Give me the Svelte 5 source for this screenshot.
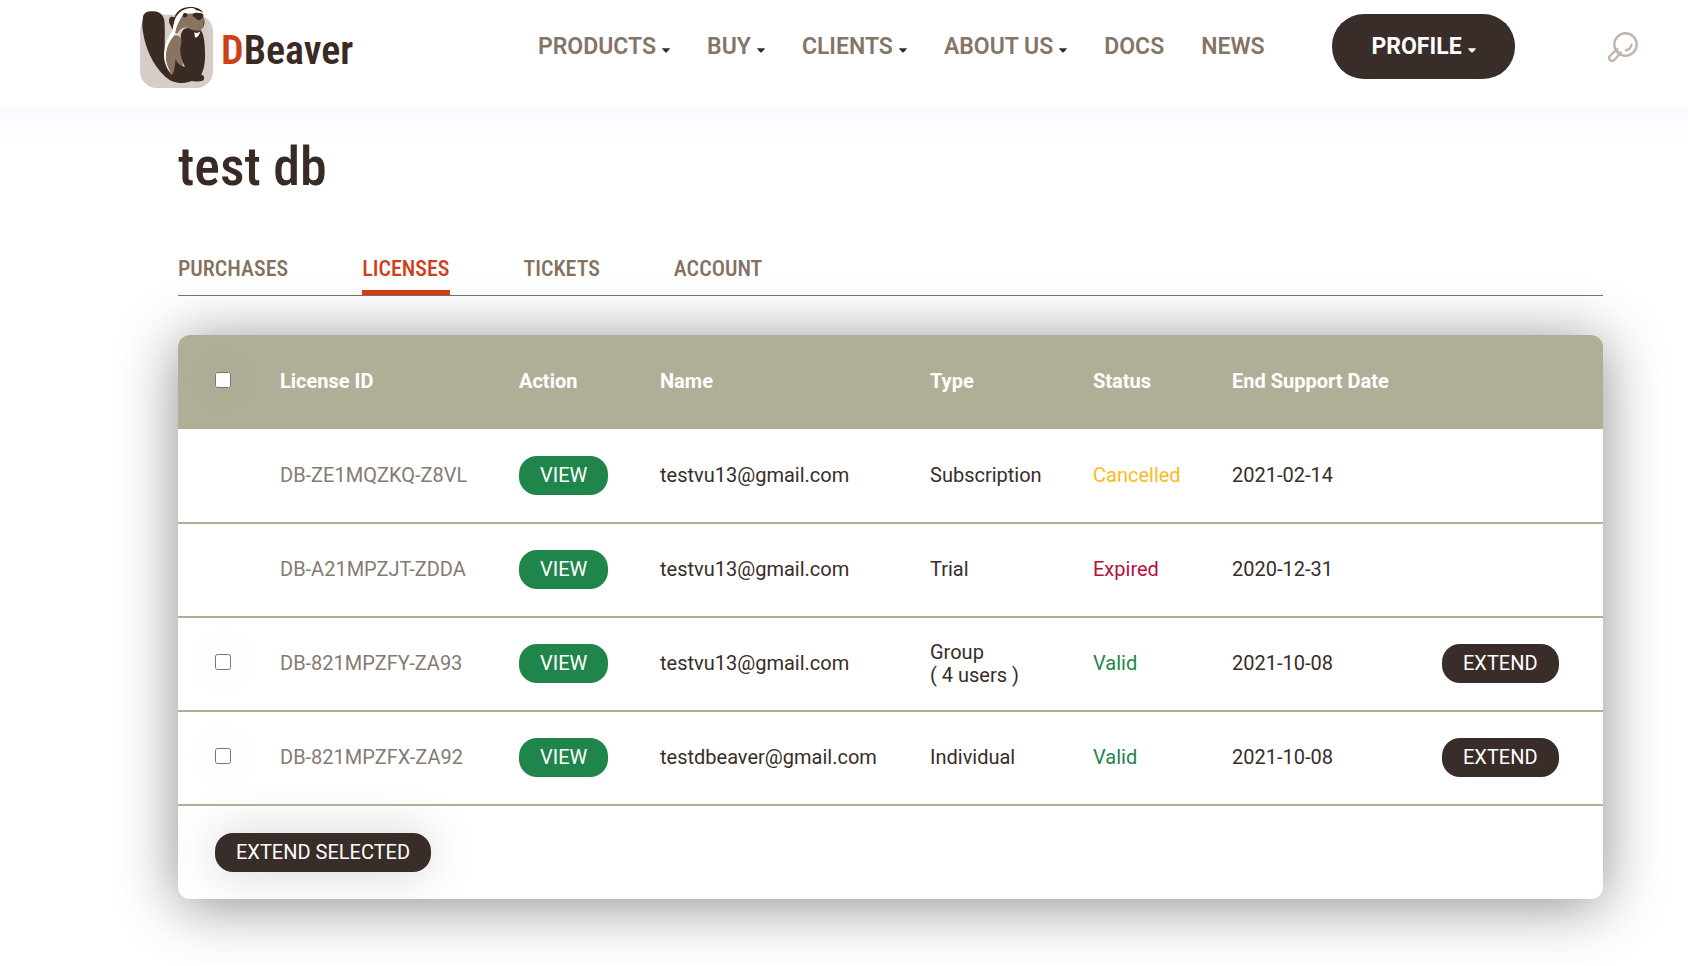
<script>
  const nav = [
    { label: 'PRODUCTS', menu: true },
    { label: 'BUY', menu: true },
    { label: 'CLIENTS', menu: true },
    { label: 'ABOUT US', menu: true },
    { label: 'DOCS', menu: false },
    { label: 'NEWS', menu: false }
  ];
  const tabs = ['PURCHASES', 'LICENSES', 'TICKETS', 'ACCOUNT'];
  const columns = [65, 239, 141, 270, 163, 139, 210, 198];
  const licenses = [
    { id: 'DB-ZE1MQZKQ-Z8VL', name: 'testvu13@gmail.com', type: 'Subscription', status: 'Cancelled', end: '2021-02-14', extend: false },
    { id: 'DB-A21MPZJT-ZDDA', name: 'testvu13@gmail.com', type: 'Trial', status: 'Expired', end: '2020-12-31', extend: false },
    { id: 'DB-821MPZFY-ZA93', name: 'testvu13@gmail.com', type: 'Group', users: '( 4 users )', status: 'Valid', end: '2021-10-08', extend: true },
    { id: 'DB-821MPZFX-ZA92', name: 'testdbeaver@gmail.com', type: 'Individual', status: 'Valid', end: '2021-10-08', extend: true }
  ];
  let active = $state('LICENSES');
  let selected = $state([]);
  const selectable = licenses.filter((l) => l.extend).map((l) => l.id);
  function toggleAll(e) {
    selected = e.currentTarget.checked ? [...selectable] : [];
  }
</script>

{#snippet caret()}
  <svg class="caret" viewBox="0 0 8 5" aria-hidden="true"><path d="M0.4 0.3h7.2q.5 0 .1.6L5 4Q4 5 3 4L.3.9Q-.1.3.4.3z" fill="currentColor" /></svg>
{/snippet}

<header>
  <a class="logo" href="#home">
    <svg class="beaver" viewBox="12 12 225 255" aria-hidden="true">
      <rect x="15" y="44" width="219" height="220" rx="50" fill="#d7cdc8" />
      <path d="M24 53C24 37 40 32 58 34C82 37 89 53 89 74C91 105 87 134 91 165L99 202C106 219 112 227 122 231L175 233L199 224C207 225 210 234 205 241C195 247 180 242 169 243C145 254 113 248 99 236C66 212 34 158 25 101C21 79 21 66 24 53Z" fill="#3a2a24" />
      <path d="M113 89L103 69C100 54 105 47 119 52C123 33 144 21 164 21C184 20 198 27 205 38C191 30 174 27 156 31C140 34 128 43 122 57C116 67 114 79 113 89Z" fill="#3a2a24" />
      <path d="M119 61C127 37 144 27 165 24C178 23 187 29 181 35C168 41 154 40 144 45C140 53 139 61 132 70C126 81 123 90 121 103C107 119 96 140 93 163C92 185 98 205 111 225C90 202 83 174 89 145C92 125 103 106 113 91Z" fill="#fff" />
      <path d="M144 45C158 38 173 41 182 40C191 38 203 38 205 49C211 67 207 79 198 90C188 97 174 93 160 84C145 78 132 88 126 104L149 122L143 198L150 236L122 231L111 225C96 197 91 178 93 161C96 136 107 119 121 103C121 85 132 61 144 45Z" fill="#8b7362" />
      <path d="M144 45C144 37 156 38 158 45C158 51 150 54 144 51ZM173 43C175 36 202 37 205 44C206 51 198 60 191 61C185 56 176 52 173 48ZM205 54C212 66 207 80 200 89C207 76 207 65 205 54Z" fill="#3a2a24" />
      <path d="M138 114C136 96 145 84 160 84C170 90 184 94 198 91C208 108 209 129 210 153C211 181 209 204 199 224L207 232C211 242 192 246 170 243C150 249 127 248 112 233L111 225C119 214 119 196 122 178C127 191 137 199 150 201C140 178 135 162 136 143C138 132 141 123 138 114Z" fill="#3a2a24" />
      <path d="M177 97C185 100 190 99 196 94C193 105 188 113 182 113C178 110 180 104 177 97ZM111 89C113 99 120 103 132 101L129 105C116 108 109 101 111 89Z" fill="#fff" />
    </svg>
    <span class="wordmark"><span>D</span>Beaver</span>
  </a>
  <nav>
    {#each nav as item}
      <a href="#{item.label.toLowerCase()}">{item.label}{#if item.menu}{@render caret()}{/if}</a>
    {/each}
  </nav>
  <button class="profile" type="button">PROFILE{@render caret()}</button>
  <button class="search" type="button" aria-label="Search">
    <svg viewBox="0 0 30 30" fill="none" stroke="#c1b6ae" stroke-width="2.400" stroke-linecap="round" aria-hidden="true">
      <circle cx="17.500" cy="12.500" r="11.200" />
      <path d="M23.500 12.800a7 7 0 0 1-5.500 5.500" />
      <path d="M7.500 18.500l-5.300 5.200c-1.300 1.500-1.200 3.400 0 4.500s3 1 4.300-.4l5-5.600" />
      <path d="M7.500 18.500c2 .2 3.600 1.700 4 3.700M8 18.400l1.300-1.400M11.800 21.800l1.200-1.200" />
    </svg>
  </button>
</header>

<main>
  <h1>test db</h1>
  <div class="tabs">
    {#each tabs as tab}
      <button type="button" class:active={active === tab} onclick={() => (active = tab)}>{tab}</button>
    {/each}
  </div>

  <section class="card">
    <table>
      <colgroup>
        {#each columns as w}<col style="width: {w}px" />{/each}
      </colgroup>
      <thead>
        <tr>
          <th><input type="checkbox" aria-label="Select all" onchange={toggleAll} /></th>
          <th>License ID</th>
          <th>Action</th>
          <th>Name</th>
          <th>Type</th>
          <th>Status</th>
          <th>End Support Date</th>
          <th></th>
        </tr>
      </thead>
      <tbody>
        {#each licenses as l}
          <tr>
            <td>{#if l.extend}<input type="checkbox" aria-label={l.id} value={l.id} bind:group={selected} />{/if}</td>
            <td><a href="#{l.id}">{l.id}</a></td>
            <td><button class="pill view" type="button">VIEW</button></td>
            <td>{l.name}</td>
            <td>{l.type}{#if l.users}<br />{l.users}{/if}</td>
            <td class={l.status.toLowerCase()}>{l.status}</td>
            <td>{l.end}</td>
            <td>{#if l.extend}<button class="pill" type="button">EXTEND</button>{/if}</td>
          </tr>
        {/each}
      </tbody>
      <tfoot>
        <tr>
          <td colspan="8"><button class="pill raised" type="button">EXTEND SELECTED</button></td>
        </tr>
      </tfoot>
    </table>
  </section>
</main>

<style>
  :global(body) {
    margin: 0;
    background: #fff;
    color: #382d29;
    font: 20px/23px Roboto, sans-serif;
  }
  a {
    color: inherit;
    text-decoration: none;
  }
  button {
    border: 0;
    font: inherit;
    cursor: pointer;
  }
  header {
    display: flex;
    height: 107px;
    box-sizing: border-box;
    padding: 0 50px 14px 139px;
    align-items: center;
    background: #fff;
  }
  .logo {
    display: flex;
    align-items: center;
    gap: 7px;
    width: 399px;
  }
  .beaver {
    width: 75px;
    height: 85px;
  }
  .wordmark {
    padding-top: 8px;
    color: #3a2a24;
    font: 600 40px/48px "Roboto Condensed", "Liberation Sans Narrow", sans-serif;
  }
  .wordmark span {
    color: #d03e18;
  }
  nav {
    display: flex;
    gap: 37px;
    color: #857567;
    font-size: 23px;
    font-weight: 600;
    line-height: 28px;
    white-space: nowrap;
  }
  .caret {
    width: 8px;
    height: 5px;
    margin: 0 0 1px 6px;
    color: #382d29;
  }
  .profile {
    width: 183px;
    height: 65px;
    margin-left: auto;
    padding: 0;
    border-radius: 32px;
    background: #382d29;
    color: #fff;
    font-size: 23px;
    font-weight: 700;
    white-space: nowrap;
  }
  .profile .caret {
    color: #fff;
  }
  .search {
    width: 30px;
    height: 30px;
    margin-left: 93px;
    padding: 0;
    background: none;
  }
  .search svg {
    display: block;
    width: 30px;
    height: 30px;
  }
  main {
    padding: 24px 85px 64px 178px;
    background: linear-gradient(#f8f9fd, #fcfdff 16px, #fff 40px);
  }
  h1 {
    margin: 0;
    color: #3a2a24;
    font: 500 54px/72px "Roboto Condensed", "Liberation Sans Narrow", sans-serif;
  }
  .tabs {
    display: flex;
    gap: 74px;
    margin: 42px 0 39px;
    border-bottom: 1px solid #857060;
  }
  .tabs button {
    padding: 8px 0 5px;
    border-bottom: 5px solid transparent;
    background: none;
    color: #857060;
    font: 500 22px/32px "Roboto Condensed", "Liberation Sans Narrow", sans-serif;
  }
  .tabs .active {
    border-color: #d03e18;
    color: #d03e18;
  }
  .card {
    overflow: hidden;
    border-radius: 12px;
    background: #fff;
    box-shadow: 0 6px 60px rgba(0, 0, 0, 0.45);
  }
  table {
    width: 100%;
    table-layout: fixed;
    border-collapse: collapse;
  }
  th,
  td {
    height: 94px;
    box-sizing: border-box;
    padding: 0 0 1px 37px;
    text-align: left;
    white-space: nowrap;
  }
  thead {
    background: #b1ae97;
    color: #fff;
  }
  tbody td {
    border-bottom: 2px solid #b1ae97;
  }
  tbody a {
    color: #857b72;
  }
  .cancelled {
    color: #fdbb1f;
  }
  .expired {
    color: #b90d3e;
  }
  .valid {
    color: #1f854b;
  }
  input {
    display: block;
    width: 16px;
    height: 16px;
    margin: 0 0 3px;
    border-radius: 3px;
    box-shadow: 0 0 40px rgba(0, 0, 0, 0.12);
  }
  .pill {
    display: block;
    height: 39px;
    padding: 0 21px;
    border-radius: 18px;
    background: #382d29;
    color: #fff;
    white-space: nowrap;
  }
  .view {
    background: #1f854b;
  }
  .raised {
    box-shadow: 0 0 50px rgba(0, 0, 0, 0.18);
  }
</style>
